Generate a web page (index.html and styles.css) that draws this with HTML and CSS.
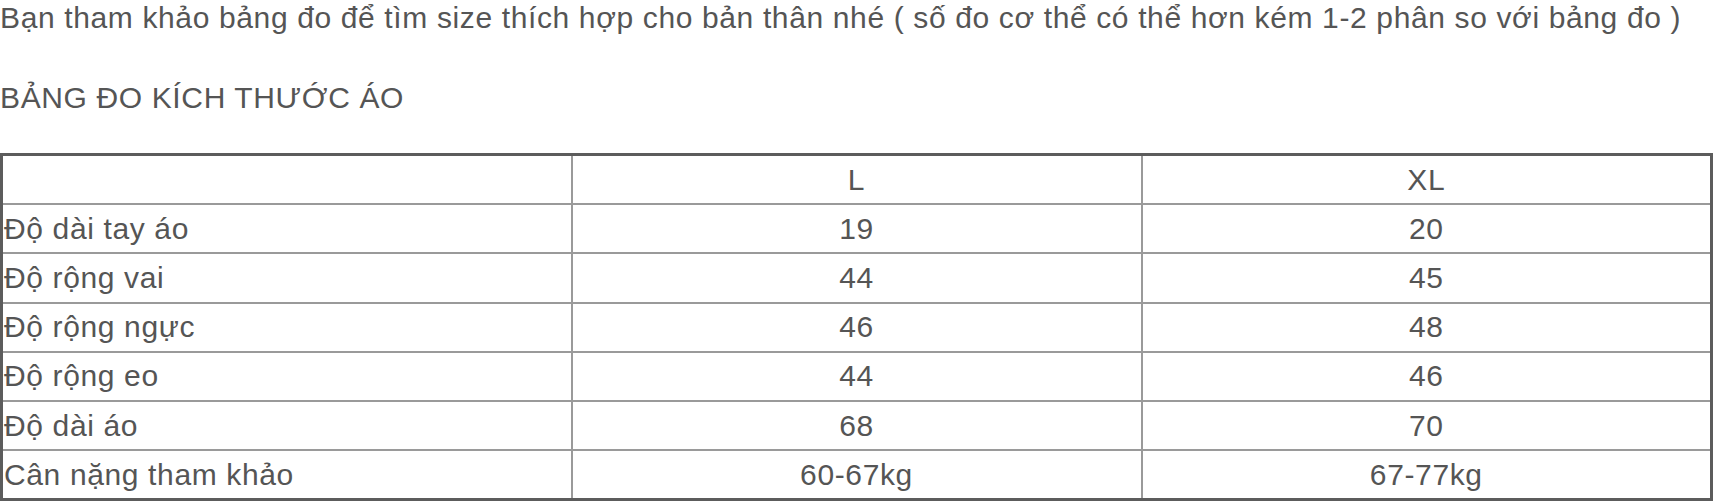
FILE: index.html
```html
<!DOCTYPE html>
<html lang="vi">
<head>
<meta charset="utf-8">
<title>Bảng đo kích thước áo</title>
<link rel="stylesheet" href="styles.css">
</head>
<body>
<div class="content">
  <p class="intro">Bạn tham khảo bảng đo để tìm size thích hợp cho bản thân nhé ( số đo cơ thể có thể hơn kém 1-2 phân so với bảng đo )</p>
  <p class="title">BẢNG ĐO KÍCH THƯỚC ÁO</p>
  <table class="size-table">
    <tr><td></td><td class="c">L</td><td class="c">XL</td></tr>
    <tr><td>Độ dài tay áo</td><td class="c">19</td><td class="c">20</td></tr>
    <tr><td>Độ rộng vai</td><td class="c">44</td><td class="c">45</td></tr>
    <tr><td>Độ rộng ngực</td><td class="c">46</td><td class="c">48</td></tr>
    <tr><td>Độ rộng eo</td><td class="c">44</td><td class="c">46</td></tr>
    <tr><td>Độ dài áo</td><td class="c">68</td><td class="c">70</td></tr>
    <tr><td>Cân nặng tham khảo</td><td class="c">60-67kg</td><td class="c">67-77kg</td></tr>
  </table>
</div>
</body>
</html>
```
FILE: styles.css
```css
html, body {
  margin: 0;
  padding: 0;
  background: #ffffff;
}
.content {
  font-family: "Liberation Sans", Arial, sans-serif;
  font-size: 30px;
  line-height: 36px;
  letter-spacing: 0.63px;
  color: #555555;
}
.intro {
  margin: 0;
  white-space: nowrap;
}
.title {
  margin: 44px 0 0 0;
}
.size-table {
  margin-top: 37px;
  width: 100%;
  border-collapse: collapse;
  border: 3px solid #5c5c5c;
  table-layout: fixed;
}
.size-table td {
  border: 2px solid #9a9a9a;
  padding: 5.6px 1px;
  height: 36px;
  text-align: left;
  white-space: nowrap;
}
.size-table td.c {
  text-align: center;
}
```
